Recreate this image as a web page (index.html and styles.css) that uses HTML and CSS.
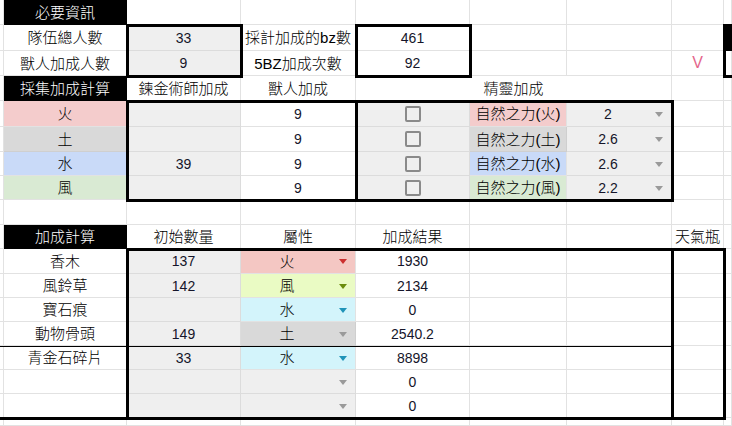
FILE: index.html
```html
<!DOCTYPE html>
<html lang="zh-Hant">
<head>
<meta charset="utf-8">
<title>採集加成計算</title>
<link rel="stylesheet" href="styles.css">
</head>
<body>
<div class="wrap">
  <div class="sheet">
    <!-- row 1 -->
    <div class="c s"></div><div class="c hd">必要資訊</div><div class="c"></div><div class="c"></div><div class="c"></div><div class="c"></div><div class="c"></div><div class="c"></div><div class="c"></div>
    <!-- row 2 -->
    <div class="c s"></div><div class="c">隊伍總人數</div><div class="c g n">33</div><div class="c">採計加成的bz數</div><div class="c n">461</div><div class="c"></div><div class="c"></div><div class="c"></div><div class="c hd"></div>
    <!-- row 3 -->
    <div class="c s"></div><div class="c">獸人加成人數</div><div class="c g n">9</div><div class="c">5BZ加成次數</div><div class="c n">92</div><div class="c"></div><div class="c"></div><div class="c mark">V</div><div class="c"></div>
    <!-- row 4 -->
    <div class="c s"></div><div class="c hd">採集加成計算</div><div class="c">鍊金術師加成</div><div class="c">獸人加成</div><div class="c span3">精靈加成</div><div class="c"></div><div class="c"></div>
    <!-- row 5 -->
    <div class="c s"></div><div class="c fire">火</div><div class="c g"></div><div class="c n">9</div><div class="c g"><span class="box"></span></div><div class="c fire">自然之力(火)</div><div class="c g dd"><span class="v n">2</span><span class="arr ag"></span></div><div class="c"></div><div class="c"></div>
    <!-- row 6 -->
    <div class="c s"></div><div class="c earth">土</div><div class="c g"></div><div class="c n">9</div><div class="c g"><span class="box"></span></div><div class="c earth">自然之力(土)</div><div class="c g dd"><span class="v n">2.6</span><span class="arr ag"></span></div><div class="c"></div><div class="c"></div>
    <!-- row 7 -->
    <div class="c s"></div><div class="c water">水</div><div class="c g n">39</div><div class="c n">9</div><div class="c g"><span class="box"></span></div><div class="c water">自然之力(水)</div><div class="c g dd"><span class="v n">2.6</span><span class="arr ag"></span></div><div class="c"></div><div class="c"></div>
    <!-- row 8 -->
    <div class="c s"></div><div class="c wind">風</div><div class="c g"></div><div class="c n">9</div><div class="c g"><span class="box"></span></div><div class="c wind">自然之力(風)</div><div class="c g dd"><span class="v n">2.2</span><span class="arr ag"></span></div><div class="c"></div><div class="c"></div>
    <!-- row 9 -->
    <div class="c s"></div><div class="c"></div><div class="c"></div><div class="c"></div><div class="c"></div><div class="c"></div><div class="c"></div><div class="c"></div><div class="c"></div>
    <!-- row 10 -->
    <div class="c s"></div><div class="c hd">加成計算</div><div class="c">初始數量</div><div class="c">屬性</div><div class="c">加成結果</div><div class="c"></div><div class="c"></div><div class="c">天氣瓶</div><div class="c"></div>
    <!-- row 11 -->
    <div class="c s"></div><div class="c">香木</div><div class="c g n">137</div><div class="c dd afire"><span class="v">火</span><span class="arr ar"></span></div><div class="c n">1930</div><div class="c"></div><div class="c"></div><div class="c"></div><div class="c"></div>
    <!-- row 12 -->
    <div class="c s"></div><div class="c">風鈴草</div><div class="c g n">142</div><div class="c dd awind"><span class="v">風</span><span class="arr aw"></span></div><div class="c n">2134</div><div class="c"></div><div class="c"></div><div class="c"></div><div class="c"></div>
    <!-- row 13 -->
    <div class="c s"></div><div class="c">寶石痕</div><div class="c g n"></div><div class="c dd awater"><span class="v">水</span><span class="arr ab"></span></div><div class="c n">0</div><div class="c"></div><div class="c"></div><div class="c"></div><div class="c"></div>
    <!-- row 14 -->
    <div class="c s"></div><div class="c">動物骨頭</div><div class="c g n">149</div><div class="c dd aearth"><span class="v">土</span><span class="arr ag"></span></div><div class="c n">2540.2</div><div class="c"></div><div class="c"></div><div class="c"></div><div class="c"></div>
    <!-- row 15 -->
    <div class="c s"></div><div class="c">青金石碎片</div><div class="c g n">33</div><div class="c dd awater"><span class="v">水</span><span class="arr ab"></span></div><div class="c n">8898</div><div class="c"></div><div class="c"></div><div class="c"></div><div class="c"></div>
    <!-- row 16 -->
    <div class="c s"></div><div class="c"></div><div class="c g"></div><div class="c dd g"><span class="v"></span><span class="arr ag"></span></div><div class="c n">0</div><div class="c"></div><div class="c"></div><div class="c"></div><div class="c"></div>
    <!-- row 17 -->
    <div class="c s"></div><div class="c"></div><div class="c g"></div><div class="c dd g"><span class="v"></span><span class="arr ag"></span></div><div class="c n">0</div><div class="c"></div><div class="c"></div><div class="c"></div><div class="c"></div>
    <!-- row 18 -->
    <div class="c s"></div><div class="c"></div><div class="c"></div><div class="c"></div><div class="c"></div><div class="c"></div><div class="c"></div><div class="c"></div><div class="c"></div>
  </div>
  <div class="overlay">
    <div class="ob b-b2"></div>
    <div class="ob b-d2"></div>
    <div class="ob b-h2"></div>
    <div class="ob b-b5"></div>
    <div class="ob b-d5"></div>
    <div class="ob b-b11"></div>
    <div class="ob b-g11"></div>
    <div class="line thin-14"></div>
    <div class="line thick-17"></div>
  </div>
</div>
</body>
</html>
```
FILE: styles.css
```css
html, body {
  margin: 0;
  padding: 0;
  background: #fff;
  overflow: hidden;
}
.wrap {
  position: relative;
  width: 732px;
  height: 426px;
  font-family: "Liberation Sans", "Noto Sans CJK TC", sans-serif;
  font-size: 15px;
  font-weight: 300;
  color: #000;
}
.sheet, .overlay {
  display: grid;
  grid-template-columns: 4px 123px 114px 115px 114px 97px 105px 52px 8px;
  grid-template-rows: 25px 26px 25px 25px 26px 25px 24px 24px 25px 24px 25px 24px 24px 24px 24px 24px 24px 8px;
}
.overlay {
  position: absolute;
  inset: 0;
  pointer-events: none;
}
.c {
  box-sizing: border-box;
  border-right: 1px solid #e2e2e2;
  border-bottom: 1px solid #e2e2e2;
  display: flex;
  align-items: center;
  justify-content: center;
  white-space: nowrap;
  overflow: visible;
  line-height: 1;
}
.span3 { grid-column: span 3; }
.hd { background: #000; color: #fff; border-color: #000; }
.g { background: #efefef; border-color: #dcdcdc; }
.n { font-size: 14px; font-weight: 400; color: #15152a; }
.fire { background: #f4cccc; }
.earth { background: #d9d9d9; border-color: #cfcfcf; }
.water { background: #c9daf8; }
.wind { background: #d9ead3; }
.mark {
  color: #e4668c;
  font-size: 16px;
  font-weight: 300;
}
.box {
  width: 16px;
  height: 16px;
  box-sizing: border-box;
  border: 2px solid #8a8a8a;
  border-radius: 2px;
}
.dd { justify-content: flex-start; }
.dd .v {
  flex: 1;
  text-align: center;
}
.arr {
  width: 0;
  height: 0;
  border-left: 4.5px solid transparent;
  border-right: 4.5px solid transparent;
  border-top: 5px solid #9a9a9a;
  margin: 1px 8px 0 6px;
}
.ag { border-top-color: #9a9a9a; }
.ar { border-top-color: #cc2f2f; }
.aw { border-top-color: #6a8c0c; }
.ab { border-top-color: #1f93b8; }
.afire { background: #f4c7c3; }
.awind { background: #eafbc4; }
.awater { background: #d3f4fb; }
.aearth { background: #d9d9d9; border-color: #cfcfcf; }

.ob {
  border: 3px solid #000;
  margin: -1px -2px -2px -1px;
}
.b-b2 { grid-column: 3 / 4; grid-row: 2 / 4; }
.b-d2 { grid-column: 5 / 6; grid-row: 2 / 4; }
.b-h2 { grid-column: 9 / 10; grid-row: 2 / 4; border-right: 0; margin-right: 0; }
.b-b5 { grid-column: 3 / 5; grid-row: 5 / 9; }
.b-d5 { grid-column: 5 / 8; grid-row: 5 / 9; }
.b-b11 { grid-column: 3 / 8; grid-row: 11 / 18; }
.b-g11 { grid-column: 8 / 9; grid-row: 11 / 18; }
.line { align-self: end; }
.thin-14 {
  grid-column: 1 / 8;
  grid-row: 14 / 15;
  border-bottom: 1px solid #000;
  margin-bottom: -1px;
}
.thick-17 {
  grid-column: 1 / 3;
  grid-row: 17 / 18;
  border-bottom: 3px solid #000;
  margin-bottom: -2px;
}
```
